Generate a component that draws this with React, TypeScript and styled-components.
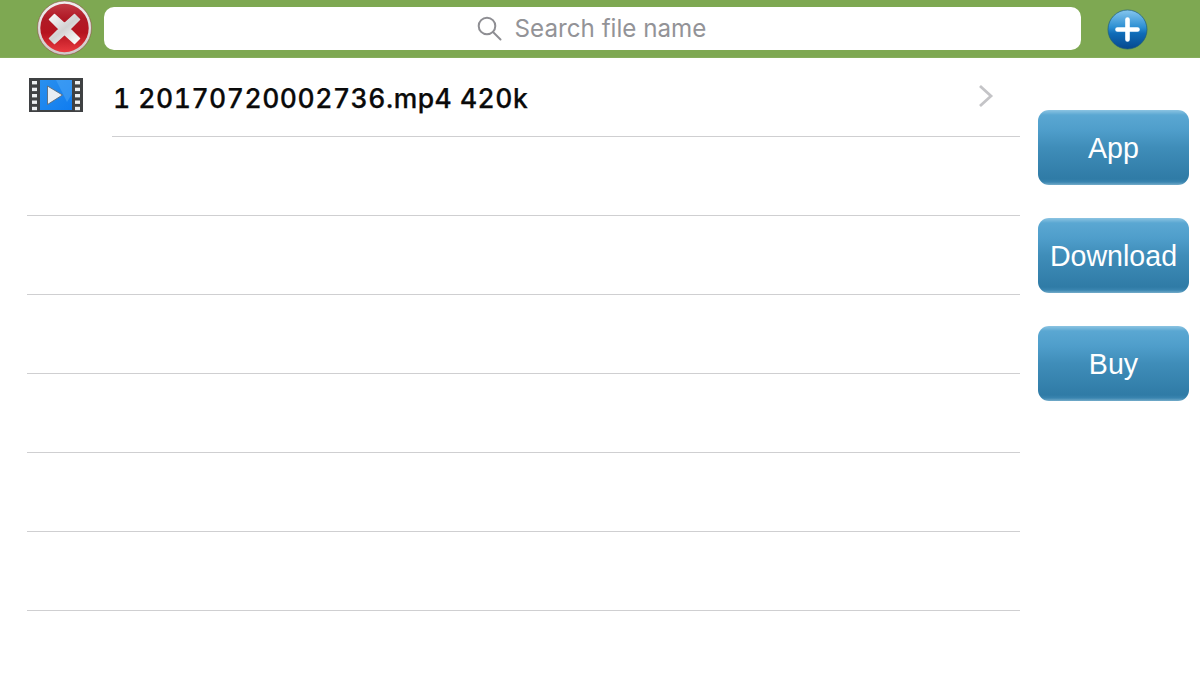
import React from "react";
import styled, { createGlobalStyle } from "styled-components";

const Global = createGlobalStyle`
  html, body { margin: 0; padding: 0; background: #fff; }
  body { width: 1200px; height: 674px; overflow: hidden; font-family: Inter, "Liberation Sans", sans-serif; }
`;

const Page = styled.div`
  width: 1200px;
  height: 674px;
  display: flex;
  flex-direction: column;
  background: #fff;
`;

const Header = styled.header`
  height: 58px;
  box-sizing: border-box;
  background: #7ea852;
  border-bottom: 1px solid #86ad5c;
  display: flex;
  align-items: flex-start;
  padding: 0 52px 0 37px;
`;

const CloseButton = styled.div`
  width: 55px;
  height: 56px;
  margin-right: 12px;
  flex: none;
`;

const SearchBar = styled.div`
  flex: none;
  width: 977px;
  height: 43px;
  margin-top: 7px;
  background: #fff;
  border-radius: 10px;
  display: flex;
  align-items: center;
  justify-content: center;
  gap: 13px;
  padding-right: 2px;
  box-sizing: border-box;
`;

const Placeholder = styled.span`
  font-family: Inter, "Liberation Sans", sans-serif;
  font-size: 24.2px;
  line-height: 43px;
  color: #939397;
`;

const AddButton = styled.div`
  width: 41px;
  height: 41px;
  margin: 9px 0 0 26px;
  flex: none;
`;

const Body = styled.div`
  flex: 1;
  display: flex;
  align-items: flex-start;
  padding-left: 27px;
`;

const List = styled.div`
  width: 993px;
  flex: none;
`;

const Row = styled.div<{ $inset?: boolean }>`
  height: 79px;
  box-sizing: border-box;
  position: relative;
  display: flex;
  align-items: flex-start;
  &::after {
    content: "";
    position: absolute;
    left: ${(p) => (p.$inset ? "85px" : "0")};
    right: 0;
    bottom: 0;
    height: 1px;
    background: #cfcfd1;
  }
`;

const FileIcon = styled.div`
  width: 54px;
  height: 34px;
  margin: 20px 30px 0 2px;
  flex: none;
`;

const FileName = styled.div`
  flex: 1;
  font-family: Inter, "Liberation Sans", sans-serif;
  font-size: 26.5px;
  font-weight: 500;
  line-height: 32px;
  margin-top: 23.5px;
  color: #0a0a0a;
  font-variant-numeric: tabular-nums;
  letter-spacing: 0.52px;
  -webkit-text-stroke: 0.25px #0a0a0a;
`;

const Chevron = styled.div`
  width: 16px;
  height: 24px;
  margin: 26px 26px 0 0;
  flex: none;
`;

const Side = styled.div`
  margin: 52px 0 0 18px;
  display: flex;
  flex-direction: column;
  gap: 33px;
`;

const ActionButton = styled.div`
  width: 151px;
  height: 75px;
  box-sizing: border-box;
  border-radius: 11px;
  background: linear-gradient(180deg, #8cc4e2 0px, #5aa7d2 5px, #4f9ecb 20px, #3f8db9 50%, #2f7ba6 92%, #3a85b0 96%, #74acca 100%);
  color: #fff;
  font-family: "Liberation Sans", Arial, sans-serif;
  font-size: 28.6px;
  display: flex;
  align-items: center;
  justify-content: center;
  padding-top: 1px;
`;

const CloseIcon = () => (
  <svg width="55" height="56" viewBox="0 0 55 56">
    <defs>
      <linearGradient id="cr" x1="0" y1="0" x2="0" y2="1">
        <stop offset="0" stopColor="#f0f0f0" />
        <stop offset="1" stopColor="#d0c8c8" />
      </linearGradient>
      <linearGradient id="cf" x1="0" y1="0" x2="0" y2="1">
        <stop offset="0" stopColor="#c23a44" />
        <stop offset="0.3" stopColor="#b01a26" />
        <stop offset="0.6" stopColor="#b5141f" />
        <stop offset="1" stopColor="#ea3a40" />
      </linearGradient>
      <linearGradient id="cx" gradientUnits="userSpaceOnUse" x1="16" y1="15" x2="39" y2="42">
        <stop offset="0" stopColor="#f6f6f6" />
        <stop offset="0.5" stopColor="#d2d2d2" />
        <stop offset="1" stopColor="#f8f8f8" />
      </linearGradient>
    </defs>
    <circle cx="27.5" cy="28" r="27" fill="url(#cr)" stroke="#8a3a3a" strokeWidth="0.5" />
    <circle cx="27.5" cy="28" r="24.2" fill="url(#cf)" />
    <path
      d="M17.5 14.5 L27.5 23.5 L37.5 14.5 L42.5 19.5 L33 29 L42.5 38.5 L37.5 43.5 L27.5 34.5 L17.5 43.5 L12.5 38.5 L22 29 L12.5 19.5 Z"
      fill="url(#cx)"
      stroke="url(#cx)"
      strokeWidth="1.5"
      strokeLinejoin="round"
    />
  </svg>
);

const AddIcon = () => (
  <svg width="41" height="41" viewBox="0 0 41 41">
    <defs>
      <linearGradient id="af" x1="0" y1="0" x2="0" y2="1">
        <stop offset="0" stopColor="#86c6ee" />
        <stop offset="0.45" stopColor="#2b8ed2" />
        <stop offset="0.6" stopColor="#0f6cb8" />
        <stop offset="1" stopColor="#07488e" />
      </linearGradient>
    </defs>
    <circle cx="20.5" cy="20.5" r="19.5" fill="url(#af)" stroke="#1d5c7a" strokeWidth="0.7" />
    <path d="M20.5 10.5 V30.5 M10.5 20.5 H30.5" stroke="#fff" strokeWidth="4.6" strokeLinecap="round" />
  </svg>
);

const SearchIcon = () => (
  <svg width="25" height="25" viewBox="0 0 25 25" fill="none" stroke="#8e8e93" strokeWidth="2">
    <circle cx="10" cy="10" r="8.3" />
    <path d="M16 16 L23.5 23.5" strokeLinecap="round" />
  </svg>
);

const holes = [3, 9.7, 16, 22.5, 28.8];

const VideoIcon = () => (
  <svg width="54" height="34" viewBox="0 0 54 34">
    <defs>
      <linearGradient id="vb" x1="0" y1="0" x2="1" y2="1">
        <stop offset="0" stopColor="#2a90ee" />
        <stop offset="1" stopColor="#0f7cf0" />
      </linearGradient>
    </defs>
    <rect x="0" y="0" width="54" height="34" fill="#3f4143" />
    <rect x="11" y="2" width="32" height="30" fill="url(#vb)" />
    <path d="M27 2 H43 V16 L38 24 Z" fill="#4da6f6" opacity="0.55" />
    {holes.map((y) => (
      <React.Fragment key={y}>
        <rect x="3" y={y} width="5" height="3.4" fill="#eceff1" />
        <rect x="46" y={y} width="5" height="3.4" fill="#eceff1" />
      </React.Fragment>
    ))}
    <path d="M18.5 8 L33.5 17 L18.5 26.5 Z" fill="#e9eef3" stroke="#5c6b78" strokeWidth="0.9" />
  </svg>
);

const ChevronIcon = () => (
  <svg width="16" height="24" viewBox="0 0 16 24" fill="none" stroke="#c4c4c7" strokeWidth="2.8">
    <path d="M2 2 L13 12 L2 22" />
  </svg>
);

export default function App() {
  const emptyRows = [1, 2, 3, 4, 5, 6];
  return (
    <Page>
      <Global />
      <Header>
        <CloseButton><CloseIcon /></CloseButton>
        <SearchBar>
          <SearchIcon />
          <Placeholder>Search file name</Placeholder>
        </SearchBar>
        <AddButton><AddIcon /></AddButton>
      </Header>
      <Body>
        <List>
          <Row $inset>
            <FileIcon><VideoIcon /></FileIcon>
            <FileName>1 20170720002736.mp4 420k</FileName>
            <Chevron><ChevronIcon /></Chevron>
          </Row>
          {emptyRows.map((r) => <Row key={r} />)}
        </List>
        <Side>
          <ActionButton>App</ActionButton>
          <ActionButton>Download</ActionButton>
          <ActionButton>Buy</ActionButton>
        </Side>
      </Body>
    </Page>
  );
}
